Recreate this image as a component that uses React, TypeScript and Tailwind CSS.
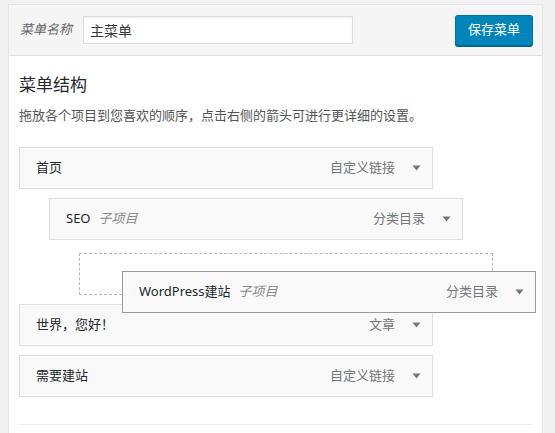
const font = '"Noto Sans", "Noto Sans CJK SC", sans-serif';

type Item = { title: string; sub?: string; type: string };

function Arrow() {
  return (
    <svg width="9" height="6" viewBox="0 0 9 6" className="shrink-0">
      <path d="M0.5 0.5 H8.5 L4.5 5.5 Z" fill="#72777c" />
    </svg>
  );
}

function MenuRow({ item, dragging }: { item: Item; dragging?: boolean }) {
  return (
    <div
      className={
        'flex h-[42px] w-[414px] items-center bg-[#f9f9f9] pl-[16px] pr-[11px] text-[13px] ' +
        (dragging ? 'border border-[#999]' : 'border border-[#dfdfdf]')
      }
    >
      <span className="text-[#23282d]">{item.title}</span>
      {item.sub && <span className="ml-[8px] italic text-[#888]">{item.sub}</span>}
      <span className="ml-auto text-[#72777c]">{item.type}</span>
      <span className="ml-[17px]">
        <Arrow />
      </span>
    </div>
  );
}

export default function App() {
  return (
    <div className="h-[433px] w-[555px] overflow-hidden bg-[#f1f1f1] pl-[8px] pt-[4px]" style={{ fontFamily: font }}>
      <div className="h-[460px] w-[535px] border border-[#e5e5e5] bg-white">
        <div className="flex h-[51px] items-center border-b border-[#dfdfdf] bg-[#f5f5f5] pl-[11px] pr-[9px]">
          <span className="text-[13px] italic text-[#666]">菜单名称</span>
          <div className="ml-[11px] flex h-[28px] w-[270px] items-center border border-[#ddd] bg-white px-[6px] text-[14px] text-[#32373c] shadow-[inset_0_1px_2px_rgba(0,0,0,0.07)]">
            主菜单
          </div>
          <button className="ml-auto h-[31px] w-[78px] rounded-[3px] border border-[#0073aa] border-b-[#006799] bg-[#0085ba] text-[13px] text-white shadow-[0_1px_0_#006799]">
            保存菜单
          </button>
        </div>

        <div className="px-[10px] pt-[18px]">
          <h3 className="text-[17px] font-normal leading-[22px] text-[#23282d]">菜单结构</h3>
          <p className="mt-[9px] text-[13px] leading-[20px] text-[#555]">
            拖放各个项目到您喜欢的顺序，点击右侧的箭头可进行更详细的设置。
          </p>

          <div className="relative mt-[22px]">
            <MenuRow item={{ title: '首页', type: '自定义链接' }} />
            <div className="ml-[30px] mt-[9px]">
              <MenuRow item={{ title: 'SEO', sub: '子项目', type: '分类目录' }} />
            </div>
            <div className="ml-[60px] mt-[13px] h-[42px] w-[414px] border border-dashed border-[#b4b9be]" />
            <div className="mt-[9px]">
              <MenuRow item={{ title: '世界，您好！', type: '文章' }} />
            </div>
            <div className="mt-[9px]">
              <MenuRow item={{ title: '需要建站', type: '自定义链接' }} />
            </div>

            <div className="absolute left-[103px] top-[124px]">
              <MenuRow item={{ title: 'WordPress建站', sub: '子项目', type: '分类目录' }} dragging />
            </div>
          </div>

          <div className="mt-[27px] border-t border-[#eee]" />
        </div>
      </div>
    </div>
  );
}
